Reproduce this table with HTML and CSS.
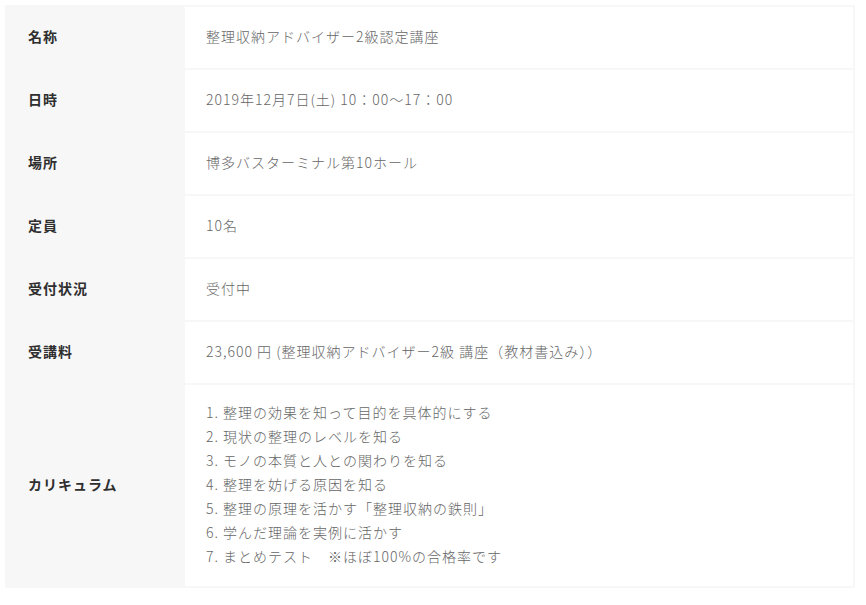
FILE: index.html
```html
<!DOCTYPE html>
<html lang="ja">
<head>
<meta charset="utf-8">
<link rel="stylesheet" href="styles.css">
</head>
<body>
<table class="info">
  <tr><th>名称</th><td>整理収納アドバイザー2級認定講座</td></tr>
  <tr><th>日時</th><td>2019年12月7日(土) 10：00〜17：00</td></tr>
  <tr><th>場所</th><td>博多バスターミナル第10ホール</td></tr>
  <tr><th>定員</th><td>10名</td></tr>
  <tr><th>受付状況</th><td>受付中</td></tr>
  <tr><th>受講料</th><td>23,600 円 (整理収納アドバイザー2級 講座（教材書込み））</td></tr>
  <tr class="tall"><th>カリキュラム</th><td>
    <ol class="list">
      <li>1. 整理の効果を知って目的を具体的にする</li>
      <li>2. 現状の整理のレベルを知る</li>
      <li>3. モノの本質と人との関わりを知る</li>
      <li>4. 整理を妨げる原因を知る</li>
      <li>5. 整理の原理を活かす「整理収納の鉄則」</li>
      <li>6. 学んだ理論を実例に活かす</li>
      <li>7. まとめテスト　※ほぼ100%の合格率です</li>
    </ol>
  </td></tr>
</table>
</body>
</html>
```

FILE: styles.css
```css
html, body {
  margin: 0;
  padding: 0;
  background: #fff;
}
body {
  padding: 5px 11px 0 5px;
  font-family: "Noto Sans CJK JP", "Noto Sans", sans-serif;
}
.info {
  width: 850px;
  border-collapse: separate;
  border-spacing: 2px;
  background: #f7f7f7;
}
.info th {
  width: 134px;
  height: 58px;
  padding: 0 21px 3px;
  background: #f7f7f7;
  text-align: left;
  font-size: 14px;
  font-weight: 700;
  letter-spacing: 1px;
  color: #2f2f2f;
}
.info td {
  height: 58px;
  padding: 0 21px 3px;
  background: #fff;
  font-size: 14px;
  font-weight: 300;
  letter-spacing: 1px;
  color: #666;
}
.info .tall th,
.info .tall td {
  height: 198px;
}
.list {
  list-style: none;
  margin: 0;
  padding: 0;
}
.list li {
  line-height: 24px;
}
```
